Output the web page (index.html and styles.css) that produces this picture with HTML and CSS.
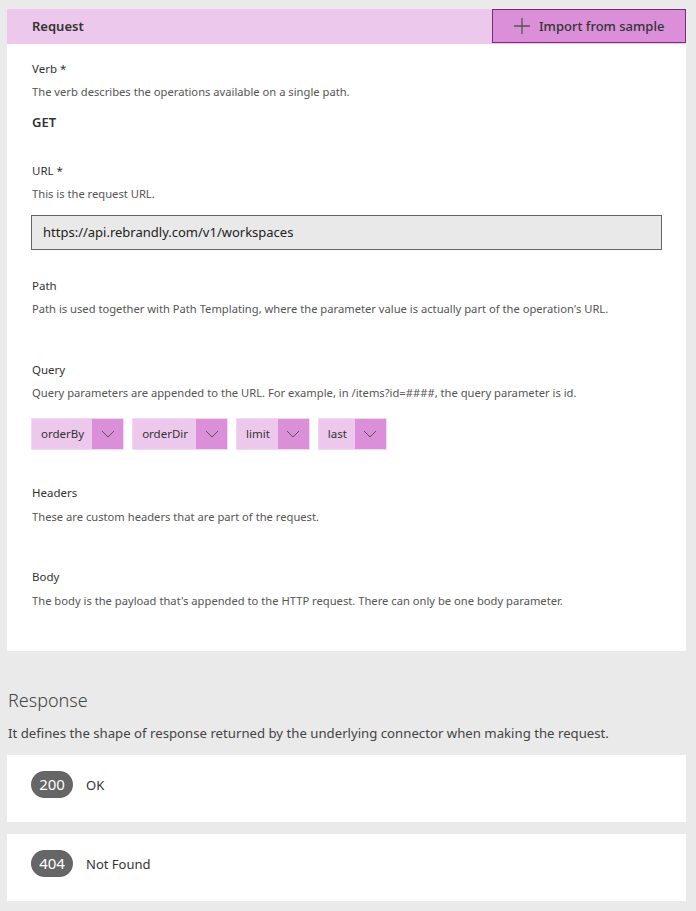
FILE: index.html
```html
<!DOCTYPE html>
<html>
<head>
<meta charset="utf-8">
<link rel="stylesheet" href="styles.css">
</head>
<body>
<div class="page">
  <section class="card request">
    <header class="req-head">
      <h2 class="req-title">Request</h2>
      <button class="import-btn">
        <svg class="plus" width="18" height="18" viewBox="0 0 18 18"><path d="M9 1v16M1 9h16" stroke="#555" stroke-width="1.3" fill="none"/></svg>
        <span>Import from sample</span>
      </button>
    </header>
    <div class="req-body">
      <div class="field f-verb">
        <div class="label">Verb *</div>
        <div class="desc">The verb describes the operations available on a single path.</div>
        <div class="value">GET</div>
      </div>
      <div class="field f-url">
        <div class="label">URL *</div>
        <div class="desc">This is the request URL.</div>
        <div class="input">https://api.rebrandly.com/v1/workspaces</div>
      </div>
      <div class="field f-path">
        <div class="label">Path</div>
        <div class="desc">Path is used together with Path Templating, where the parameter value is actually part of the operation's URL.</div>
      </div>
      <div class="field f-query">
        <div class="label">Query</div>
        <div class="desc">Query parameters are appended to the URL. For example, in /items?id=####, the query parameter is id.</div>
        <div class="chips">
          <div class="chip"><span class="chip-text">orderBy</span><span class="chip-arrow"><svg width="14" height="8" viewBox="0 0 14 8"><path d="M1 1l6 6 6-6" stroke="#555" stroke-width="1" fill="none"/></svg></span></div>
          <div class="chip"><span class="chip-text">orderDir</span><span class="chip-arrow"><svg width="14" height="8" viewBox="0 0 14 8"><path d="M1 1l6 6 6-6" stroke="#555" stroke-width="1" fill="none"/></svg></span></div>
          <div class="chip"><span class="chip-text">limit</span><span class="chip-arrow"><svg width="14" height="8" viewBox="0 0 14 8"><path d="M1 1l6 6 6-6" stroke="#555" stroke-width="1" fill="none"/></svg></span></div>
          <div class="chip"><span class="chip-text">last</span><span class="chip-arrow"><svg width="14" height="8" viewBox="0 0 14 8"><path d="M1 1l6 6 6-6" stroke="#555" stroke-width="1" fill="none"/></svg></span></div>
        </div>
      </div>
      <div class="field f-headers">
        <div class="label">Headers</div>
        <div class="desc">These are custom headers that are part of the request.</div>
      </div>
      <div class="field f-body">
        <div class="label">Body</div>
        <div class="desc">The body is the payload that's appended to the HTTP request. There can only be one body parameter.</div>
      </div>
    </div>
  </section>

  <section class="response">
    <h2 class="resp-title">Response</h2>
    <p class="resp-desc">It defines the shape of response returned by the underlying connector when making the request.</p>
    <div class="card resp-card"><span class="badge">200</span><span class="resp-text">OK</span></div>
    <div class="card resp-card"><span class="badge">404</span><span class="resp-text">Not Found</span></div>
  </section>
</div>
</body>
</html>
```
FILE: styles.css
```css
html, body {
  margin: 0;
  padding: 0;
  background: #eaeaea;
}
body {
  font-family: "Noto Sans", "Open Sans", sans-serif;
  color: #333;
}
.page {
  width: 679px;
  margin-left: 7px;
  padding-top: 9px;
}
.card {
  background: #fff;
}
.request {
  height: 642px;
}
.req-head {
  display: flex;
  justify-content: space-between;
  align-items: stretch;
  background: #ecc8ec;
  height: 35px;
}
.req-title {
  margin: 0;
  padding-left: 25px;
  font-size: 13px;
  font-weight: 600;
  line-height: 35px;
  color: #333;
}
.import-btn {
  display: flex;
  align-items: center;
  gap: 8px;
  box-sizing: border-box;
  width: 194px;
  height: 34px;
  background: #da8fd8;
  border: 1px solid #7b2a7b;
  padding: 0 0 0 20px;
  font-family: inherit;
  font-size: 13px;
  font-weight: 500;
  color: #333;
}
.req-body {
  padding: 17px 25px 0 24px;
}
.field {
  display: flex;
  flex-direction: column;
}
.label {
  font-size: 11.5px;
  line-height: 16px;
  color: #333;
  padding-left: 1px;
}
.desc {
  font-size: 11.2px;
  line-height: 16px;
  margin-top: 7px;
  color: #555;
  padding-left: 1px;
}
.value {
  font-size: 13px;
  font-weight: 600;
  margin-top: 13px;
  line-height: 18px;
  padding-left: 1px;
}
.f-url { margin-top: 32px; }
.input {
  margin-top: 13px;
  box-sizing: border-box;
  height: 35px;
  width: 631px;
  border: 1px solid #666;
  background: #e9e9e9;
  font-size: 13px;
  line-height: 33px;
  padding-left: 11px;
  color: #222;
}
.f-path { margin-top: 28px; }
.f-query { margin-top: 45px; }
.chips {
  display: flex;
  gap: 8px;
  margin-top: 17px;
}
.chip {
  display: flex;
  height: 32px;
  box-sizing: border-box;
  border: 1px solid #f3d8f3;
  background: #ecc8ec;
}
.chip-text {
  font-size: 11.5px;
  line-height: 30px;
  padding: 0 8px 0 9px;
  color: #333;
}
.chip-arrow {
  width: 31px;
  display: flex;
  align-items: center;
  justify-content: center;
  background: #da8fd8;
}
.f-headers { margin-top: 35px; }
.f-headers .desc { margin-top: 8px; }
.f-body { margin-top: 44px; }
.f-body .desc { margin-top: 8px; }

.response {
  padding-top: 35px;
}
.resp-title {
  margin: 0 0 0 1px;
  font-size: 18px;
  font-weight: 300;
  line-height: 28px;
  color: #444;
}
.resp-desc {
  margin: 9px 0 0 1px;
  font-size: 13.2px;
  line-height: 20px;
  color: #444;
}
.resp-card {
  height: 67px;
  margin-top: 12px;
  display: flex;
  align-items: center;
  padding-left: 24px;
  gap: 13px;
}
.response .resp-card:first-of-type { margin-top: 12px; }
.badge {
  display: inline-block;
  width: 42px;
  height: 27px;
  border-radius: 14px;
  background: #666;
  color: #fff;
  font-size: 15px;
  line-height: 27px;
  text-align: center;
  margin-top: -8px;
}
.resp-text {
  font-size: 13px;
  margin-top: -8px;
}
```
